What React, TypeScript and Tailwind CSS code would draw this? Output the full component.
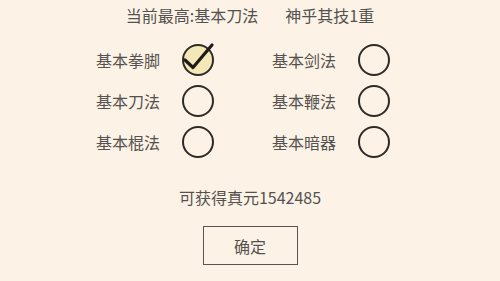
const skills = [
  ["基本拳脚", "基本剑法"],
  ["基本刀法", "基本鞭法"],
  ["基本棍法", "基本暗器"],
];

const Circle = ({ checked }: { checked?: boolean }) => (
  <svg width="34" height="34" viewBox="0 0 34 34" className="overflow-visible">
    <circle
      cx="17"
      cy="17"
      r="15"
      fill={checked ? "#f4e7b8" : "none"}
      stroke="#2e2a26"
      strokeWidth="2"
    />
    {checked && (
      <path
        d="M4 17 L12 24.5 L31 2"
        fill="none"
        stroke="#1e1b18"
        strokeWidth="3.2"
        strokeLinecap="round"
        strokeLinejoin="round"
      />
    )}
  </svg>
);

export default function App() {
  return (
    <div
      className="w-[500px] h-[281px] overflow-hidden bg-[#fcf2e6] flex flex-col text-[#545250] text-[16px]"
      style={{ fontFamily: '"Noto Sans CJK SC", "Noto Sans", sans-serif' }}
    >
      <div className="mt-[5px] h-5 leading-5 flex justify-center gap-[27px]">
        <span>当前最高:基本刀法</span>
        <span>神乎其技1重</span>
      </div>

      <div className="mt-[18px] ml-[96px] grid grid-cols-[119px_119px] gap-x-[57px] gap-y-[7px]">
        {skills.map((row, i) =>
          row.map((name, j) => (
            <div key={name} className="h-[34px] flex items-center justify-between">
              <span className="leading-5">{name}</span>
              <Circle checked={i === 0 && j === 0} />
            </div>
          ))
        )}
      </div>

      <div className="mt-[28px] h-5 leading-5 text-center">可获得真元1542485</div>

      <div className="mt-[19px] flex justify-center">
        <button className="w-[95px] h-[39px] border-[1.5px] border-[#5a5550] bg-transparent text-[#545250] leading-5">
          确定
        </button>
      </div>
    </div>
  );
}
